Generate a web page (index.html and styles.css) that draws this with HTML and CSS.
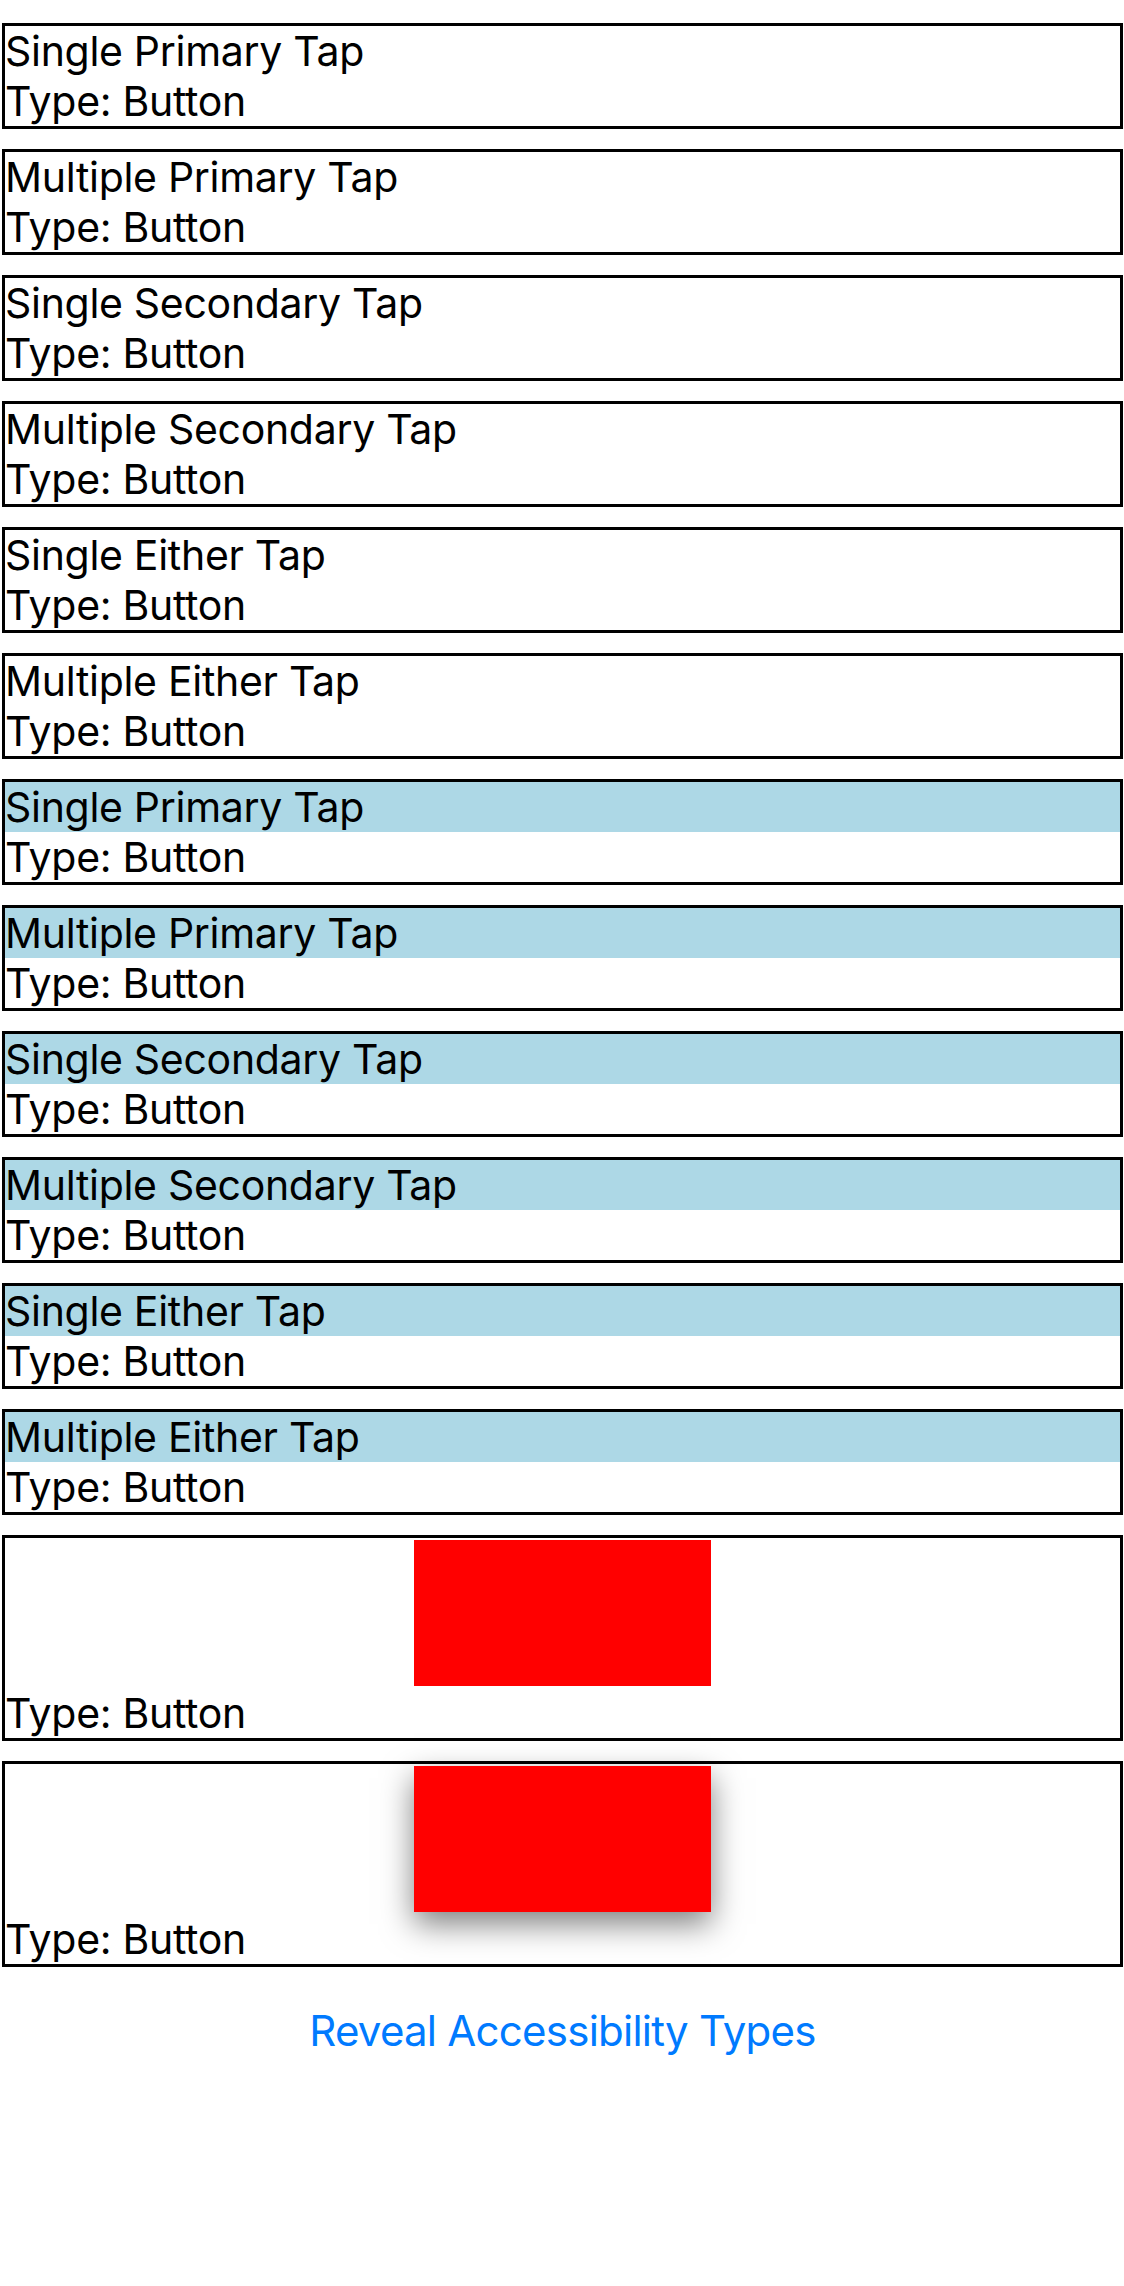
FILE: index.html
```html
<!DOCTYPE html>
<html lang="en">
<head>
<meta charset="utf-8">
<title>Accessibility Types</title>
<link rel="stylesheet" href="styles.css">
</head>
<body>
<div class="list">
  <div class="cell"><div class="title">Single Primary Tap</div><div class="type">Type: Button</div></div>
  <div class="cell"><div class="title">Multiple Primary Tap</div><div class="type">Type: Button</div></div>
  <div class="cell"><div class="title">Single Secondary Tap</div><div class="type">Type: Button</div></div>
  <div class="cell"><div class="title">Multiple Secondary Tap</div><div class="type">Type: Button</div></div>
  <div class="cell"><div class="title">Single Either Tap</div><div class="type">Type: Button</div></div>
  <div class="cell"><div class="title">Multiple Either Tap</div><div class="type">Type: Button</div></div>
  <div class="cell highlighted"><div class="title">Single Primary Tap</div><div class="type">Type: Button</div></div>
  <div class="cell highlighted"><div class="title">Multiple Primary Tap</div><div class="type">Type: Button</div></div>
  <div class="cell highlighted"><div class="title">Single Secondary Tap</div><div class="type">Type: Button</div></div>
  <div class="cell highlighted"><div class="title">Multiple Secondary Tap</div><div class="type">Type: Button</div></div>
  <div class="cell highlighted"><div class="title">Single Either Tap</div><div class="type">Type: Button</div></div>
  <div class="cell highlighted"><div class="title">Multiple Either Tap</div><div class="type">Type: Button</div></div>
  <div class="cell image-cell"><div class="swatch"></div><div class="type">Type: Button</div></div>
  <div class="cell image-cell"><div class="swatch swatch-shadow"></div><div class="type">Type: Button</div></div>
</div>
<div class="reveal"><a class="reveal-link" href="#">Reveal Accessibility Types</a></div>
</body>
</html>
```
FILE: styles.css
```css
html {
  background: #ffffff;
}

body {
  margin: 0;
  padding: 23px 1px 0 2px;
  font-family: Inter, "Noto Sans", "Liberation Sans", sans-serif;
  color: #000000;
  background: #ffffff;
}

.list {
  display: flex;
  flex-direction: column;
  gap: 20px;
}

.cell {
  border: 3px solid #000000;
  display: flex;
  flex-direction: column;
}

.title,
.type {
  font-size: 41px;
  line-height: 50px;
  height: 50px;
  letter-spacing: -0.3px;
  white-space: nowrap;
}

.highlighted .title {
  background: #add8e6;
}

.image-cell {
  align-items: stretch;
}

.swatch {
  align-self: center;
  width: 297px;
  height: 146px;
  margin: 1.5px 0 2.5px;
  background: #ff0000;
}

.swatch-shadow {
  box-shadow: 0 12px 30px rgba(0, 0, 0, 0.5);
}

.reveal {
  display: flex;
  justify-content: center;
  margin-top: 38px;
}

.reveal-link {
  font-size: 42px;
  line-height: 52px;
  letter-spacing: -0.75px;
  color: #007aff;
  text-decoration: none;
}
```
